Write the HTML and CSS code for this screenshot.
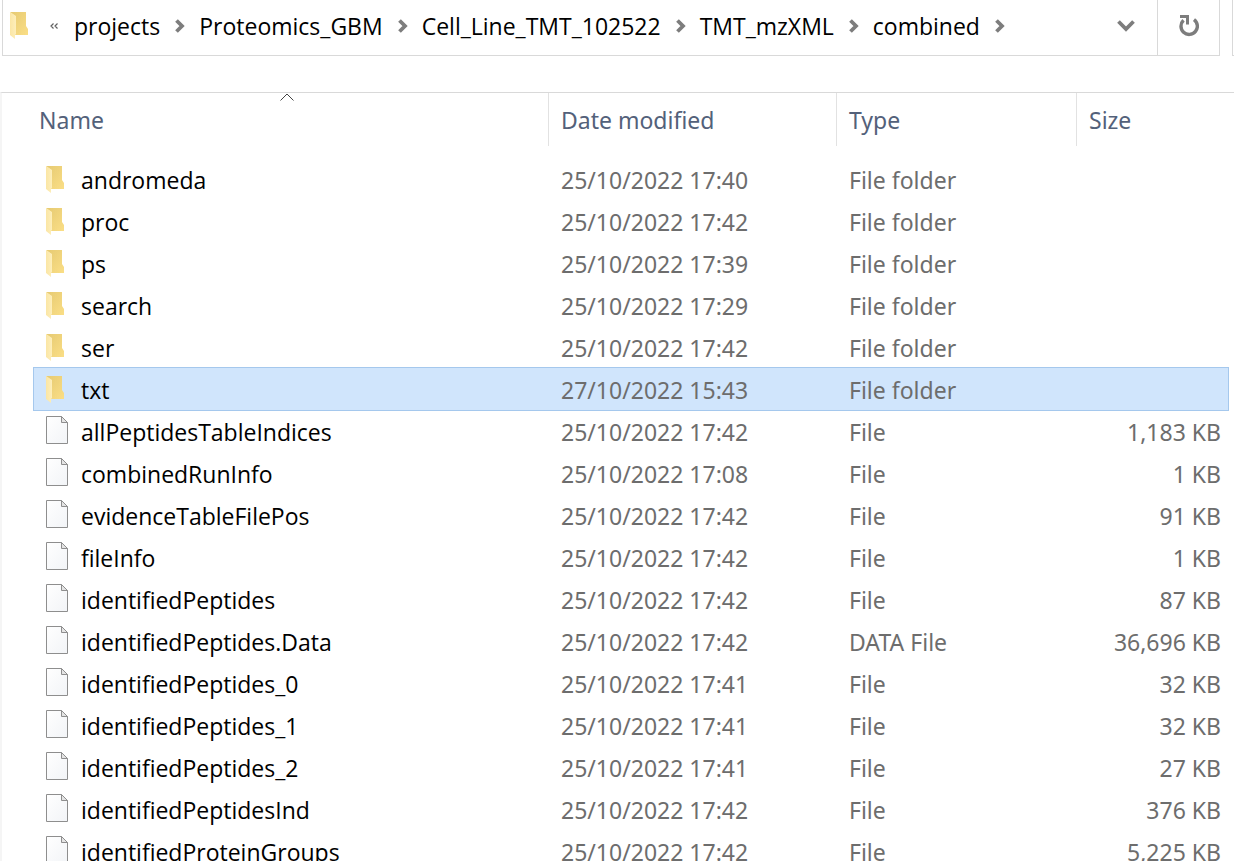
FILE: index.html
```html
<!DOCTYPE html>
<html lang="en">
<head>
<meta charset="utf-8">
<title>combined</title>
<link rel="stylesheet" href="styles.css">
</head>
<body>
<svg class="sprite" aria-hidden="true">
  <defs>
    <linearGradient id="gold" x1="0" y1="0" x2="1" y2="1">
      <stop offset="0" stop-color="#e6ca72"/>
      <stop offset="1" stop-color="#fade86"/>
    </linearGradient>
    <linearGradient id="flap" x1="0" y1="0" x2="1" y2="0">
      <stop offset="0" stop-color="#fbe6a4"/>
      <stop offset="1" stop-color="#fdeebb"/>
    </linearGradient>
    <linearGradient id="paper" x1="0" y1="0" x2="1" y2="1">
      <stop offset="0" stop-color="#ffffff"/>
      <stop offset="1" stop-color="#f2f4f7"/>
    </linearGradient>
    <symbol id="folder" viewBox="0 0 18 28">
      <path d="M0 0H16V14L18 17V23H5V4Z" fill="url(#gold)"/>
      <path d="M0 0L6 4V22L5 23V27L0 23Z" fill="url(#flap)"/>
    </symbol>
    <symbol id="file" viewBox="0 0 22 28">
      <path d="M.5.5H15.500L21.500 6.500V27.500H.5Z" fill="url(#paper)" stroke="#8e8e8e"/>
      <path d="M15.500.5V6.500H21.500Z" fill="#e4e4e4" stroke="#8e8e8e"/>
    </symbol>
    <symbol id="chevron" viewBox="0 0 10 14">
      <path d="M1.500 1.500L7 7L1.500 12.500" fill="none" stroke="#7d7d7d" stroke-width="3.800"/>
    </symbol>
  </defs>
</svg>

<div class="window">
  <header class="toolbar">
    <div class="address">
      <svg class="folder-icon" aria-hidden="true"><use href="#folder"/></svg>
      <nav class="crumbs" aria-label="Path">
        <button class="more" type="button" aria-label="Parent folders"><svg class="more-icon" viewBox="0 0 8 6"><path d="M3.500.5L1 3L3.500 5.500M7.500.5L5 3L7.500 5.500" fill="none" stroke="#606060" stroke-width="1.200"/></svg></button>
        <a href="#">projects</a><svg class="chevron"><use href="#chevron"/></svg>
        <a href="#">Proteomics_GBM</a><svg class="chevron"><use href="#chevron"/></svg>
        <a href="#">Cell_Line_TMT_102522</a><svg class="chevron"><use href="#chevron"/></svg>
        <a href="#">TMT_mzXML</a><svg class="chevron"><use href="#chevron"/></svg>
        <a href="#">combined</a><svg class="chevron"><use href="#chevron"/></svg>
      </nav>
      <button class="history" type="button" aria-label="Previous locations"><svg class="down" viewBox="0 0 18 12"><path d="M1.500 1.500L9 9L16.500 1.500" fill="none" stroke="#7d7d7d" stroke-width="3.800"/></svg></button>
      <button class="refresh" type="button" aria-label="Refresh"><svg class="reload" viewBox="0 0 20 22"><path d="M15 4.600A8.200 8.200 0 1 1 4.500 5.300" fill="none" stroke="#7d7d7d" stroke-width="3.400"/><path d="M1 1.500H8.500V9.500" fill="none" stroke="#7d7d7d" stroke-width="3"/></svg></button>
    </div>
    <div class="search"></div>
  </header>

  <main class="listing">
    <table class="files">
      <colgroup><col><col class="col-date"><col class="col-type"><col class="col-size"></colgroup>
      <thead>
        <tr>
          <th aria-sort="ascending"><button class="head head-name" type="button">Name<svg class="sort" viewBox="0 0 14 8"><path d="M.5 7.500L7 1L13.500 7.500" fill="none" stroke="#444"/></svg></button></th>
          <th><button class="head" type="button">Date modified</button></th>
          <th><button class="head" type="button">Type</button></th>
          <th><button class="head head-last" type="button">Size</button></th>
        </tr>
      </thead>
      <tbody>
        <tr><td><span class="name"><svg class="folder-icon"><use href="#folder"/></svg>andromeda</span></td><td>25/10/2022 17:40</td><td>File folder</td><td></td></tr>
        <tr><td><span class="name"><svg class="folder-icon"><use href="#folder"/></svg>proc</span></td><td>25/10/2022 17:42</td><td>File folder</td><td></td></tr>
        <tr><td><span class="name"><svg class="folder-icon"><use href="#folder"/></svg>ps</span></td><td>25/10/2022 17:39</td><td>File folder</td><td></td></tr>
        <tr><td><span class="name"><svg class="folder-icon"><use href="#folder"/></svg>search</span></td><td>25/10/2022 17:29</td><td>File folder</td><td></td></tr>
        <tr><td><span class="name"><svg class="folder-icon"><use href="#folder"/></svg>ser</span></td><td>25/10/2022 17:42</td><td>File folder</td><td></td></tr>
        <tr class="selected"><td><span class="name"><svg class="folder-icon"><use href="#folder"/></svg>txt</span></td><td>27/10/2022 15:43</td><td>File folder</td><td></td></tr>
        <tr><td><span class="name"><svg class="file-icon"><use href="#file"/></svg>allPeptidesTableIndices</span></td><td>25/10/2022 17:42</td><td>File</td><td>1,183 KB</td></tr>
        <tr><td><span class="name"><svg class="file-icon"><use href="#file"/></svg>combinedRunInfo</span></td><td>25/10/2022 17:08</td><td>File</td><td>1 KB</td></tr>
        <tr><td><span class="name"><svg class="file-icon"><use href="#file"/></svg>evidenceTableFilePos</span></td><td>25/10/2022 17:42</td><td>File</td><td>91 KB</td></tr>
        <tr><td><span class="name"><svg class="file-icon"><use href="#file"/></svg>fileInfo</span></td><td>25/10/2022 17:42</td><td>File</td><td>1 KB</td></tr>
        <tr><td><span class="name"><svg class="file-icon"><use href="#file"/></svg>identifiedPeptides</span></td><td>25/10/2022 17:42</td><td>File</td><td>87 KB</td></tr>
        <tr><td><span class="name"><svg class="file-icon"><use href="#file"/></svg>identifiedPeptides.Data</span></td><td>25/10/2022 17:42</td><td>DATA File</td><td>36,696 KB</td></tr>
        <tr><td><span class="name"><svg class="file-icon"><use href="#file"/></svg>identifiedPeptides_0</span></td><td>25/10/2022 17:41</td><td>File</td><td>32 KB</td></tr>
        <tr><td><span class="name"><svg class="file-icon"><use href="#file"/></svg>identifiedPeptides_1</span></td><td>25/10/2022 17:41</td><td>File</td><td>32 KB</td></tr>
        <tr><td><span class="name"><svg class="file-icon"><use href="#file"/></svg>identifiedPeptides_2</span></td><td>25/10/2022 17:41</td><td>File</td><td>27 KB</td></tr>
        <tr><td><span class="name"><svg class="file-icon"><use href="#file"/></svg>identifiedPeptidesInd</span></td><td>25/10/2022 17:42</td><td>File</td><td>376 KB</td></tr>
        <tr><td><span class="name"><svg class="file-icon"><use href="#file"/></svg>identifiedProteinGroups</span></td><td>25/10/2022 17:42</td><td>File</td><td>5,225 KB</td></tr>
      </tbody>
    </table>
  </main>
</div>
</body>
</html>
```
FILE: styles.css
```css
* { box-sizing: border-box; }

body {
  margin: 0;
  background: #fff;
  color: #000;
  font-family: "Noto Sans", "Open Sans", sans-serif;
  font-size: 23px;
  line-height: 32px;
}

button {
  border: 0;
  padding: 0;
  background: none;
  font: inherit;
  color: inherit;
}

svg { display: block; flex: none; }

.sprite { position: absolute; width: 0; height: 0; }

.window {
  display: flex;
  flex-direction: column;
  height: calc(100vh - 5px);
  overflow: hidden;
}

.toolbar {
  display: flex;
  flex: none;
  gap: 12px;
  height: 56px;
  margin: 0 0 36px 2px;
}

.address {
  display: flex;
  flex: 1;
  align-items: stretch;
  border: 1px solid #d9d9d9;
  border-top: 0;
  padding-left: 7px;
}

.address .folder-icon { margin-top: 12px; }

.search {
  width: 2px;
  border: 1px solid #d9d9d9;
  border-width: 0 0 1px 1px;
}

.crumbs {
  display: flex;
  flex: 1;
  align-items: center;
  padding: 0 0 4px 22px;
  font-family: "Open Sans", "Noto Sans", sans-serif;
}

.crumbs a { color: inherit; text-decoration: none; }

.more { margin-right: 16px; }
.more-icon { width: 8px; height: 6px; }

.chevron {
  width: 10px;
  height: 14px;
  margin: 0 14px 0 15px;
}

.history, .refresh {
  display: flex;
  align-items: center;
  justify-content: center;
  width: 62px;
  padding-bottom: 4px;
}

.refresh { border-left: 1px solid #d9d9d9; }
.down { width: 18px; height: 12px; }
.reload { width: 20px; height: 22px; }

.folder-icon { width: 18px; height: 28px; }
.file-icon { width: 22px; height: 28px; }

.listing {
  flex: 1;
  min-height: 0;
  overflow: hidden;
  border-top: 1px solid #d9d9d9;
  border-left: 2px solid #f5f5f5;
  padding: 0 6px 0 32px;
}

.files {
  width: 100%;
  table-layout: fixed;
  border-collapse: collapse;
}

.col-date { width: 288px; }
.col-type { width: 240px; }
.col-size { width: 151px; }

th {
  padding: 0 0 12px;
  font-weight: 400;
  text-align: left;
}

.head {
  position: relative;
  display: block;
  width: 100%;
  height: 53px;
  padding: 0 12px 0;
  border-right: 1px solid #e2e2e2;
  color: #53617a;
  text-align: left;
}

.head-name { padding-left: 5px; }
.head-last { border-right: 0; }

.sort {
  position: absolute;
  top: 0;
  left: calc(50% - 11px);
  width: 14px;
  height: 8px;
}

td {
  height: 42px;
  padding: 2px 7px 0 12px;
  color: #6d6d6d;
  white-space: nowrap;
}

td:first-child {
  color: #000;
  font-family: "Open Sans", "Noto Sans", sans-serif;
}

td:last-child { text-align: right; }

.name {
  display: grid;
  grid-template-columns: 35px 1fr;
  align-items: center;
}

.name .file-icon { margin-top: -5px; }
.name .folder-icon { margin-top: -1px; }

.selected {
  background: #d0e5fc;
  outline: 1px solid #a5c8ed;
}
```
